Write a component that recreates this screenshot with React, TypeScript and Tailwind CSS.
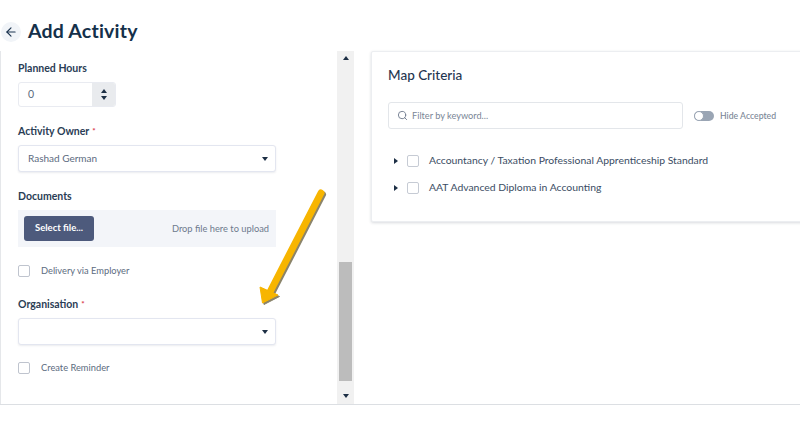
import React from 'react';
import { ArrowLeft, Search } from 'lucide-react';

const Caret = ({ className = '' }: { className?: string }) => <span className={`w-0 h-0 border-x-[3px] border-x-transparent border-t-[4px] border-t-[#1d2f45] ${className}`} />;
const CaretUp = ({ className = '' }: { className?: string }) => <span className={`w-0 h-0 border-x-[3px] border-x-transparent border-b-[4px] border-b-[#1d2f45] ${className}`} />;

const Label = ({ text, required }: { text: string; required?: boolean }) => (
    <div className="h-[14px] leading-[14px] text-[10.5px] font-bold text-[#2a3d55]">
        {text}
        {required && <span className="align-top text-[8px] text-[#d9364a] ml-[3px]">*</span>}
    </div>
);

const Check = ({ text }: { text: string }) => (
    <div className="flex items-center h-[12px]">
        <span className="w-[12px] h-[12px] rounded-[2px] border border-[#bfc4ce] bg-white" />
        <span className="ml-[11px] text-[9.3px] text-[#5c6b80]">{text}</span>
    </div>
);

const Select = ({ value }: { value?: string }) => (
    <div className="mt-[7px] w-[258px] h-[27px] flex items-center justify-between pl-[9px] pr-[7px] rounded-[3px] border border-[#e3e6f0] bg-white shadow-[0_1px_2px_rgba(60,70,100,0.1)]">
        <span className="text-[10px] text-[#5c6b80]">{value}</span>
        <Caret />
    </div>
);

const TreeRow = ({ text }: { text: string }) => (
    <div className="flex items-center h-[14px]">
        <span className="ml-[6px] w-0 h-0 border-y-[3px] border-y-transparent border-l-[4px] border-l-[#1d2f45]" />
        <span className="ml-[9px] w-[12px] h-[12px] rounded-[2px] border border-[#c6cbd4] bg-white" />
        <span className="ml-[10px] text-[10.4px] text-[#3a4c63]">{text}</span>
    </div>
);

export default function App() {
    return (
        <div className="relative w-[800px] h-[437px] overflow-hidden bg-white font-['Lato',sans-serif]">
            {/* Header */}
            <div className="h-[51px] pt-[11px] flex items-center">
                <div className="ml-[1px] mt-[1px] w-[20px] h-[20px] rounded-full bg-[#f1f4f8] flex items-center justify-center">
                    <ArrowLeft className="w-[14px] h-[14px] text-[#1d3550]" strokeWidth={2} />
                </div>
                <h1 className="ml-[7px] text-[19.5px] font-bold tracking-[0.2px] text-[#14304a]">Add Activity</h1>
            </div>

            <div className="flex h-[354px] border-b border-[#dcdfe3]">
                {/* Left form */}
                <div className="w-[337px] shrink-0 border-l border-[#e5e7ea] pl-[17px] pt-[10px]">
                    <Label text="Planned Hours" />
                    <div className="mt-[7px] w-[98px] h-[25px] flex rounded-[3px] border border-[#e9ebf1] bg-white overflow-hidden">
                        <span className="flex-1 pl-[9px] text-[10.5px] leading-[23px] text-[#5c6b80]">0</span>
                        <div className="w-[23px] bg-[#e9ebee] flex flex-col items-center justify-center gap-[3px]">
                            <CaretUp />
                            <Caret />
                        </div>
                    </div>
                    <div className="mt-[17px]"><Label text="Activity Owner" required /></div>
                    <Select value="Rashad German" />
                    <div className="mt-[17px]"><Label text="Documents" /></div>
                    <div className="mt-[7px] w-[258px] h-[37px] flex items-center justify-between pl-[6px] pr-[7px] bg-[#f3f5f9]">
                        <span className="w-[70px] h-[25px] rounded-[3px] bg-[#4d5a7c] text-white text-[9.5px] font-bold flex items-center justify-center">Select file...</span>
                        <span className="text-[9.3px] text-[#6e7a8d]">Drop file here to upload</span>
                    </div>
                    <div className="mt-[18px]"><Check text="Delivery via Employer" /></div>
                    <div className="mt-[20px]"><Label text="Organisation" required /></div>
                    <Select />
                    <div className="mt-[17px]"><Check text="Create Reminder" /></div>
                </div>

                {/* Scrollbar */}
                <div className="w-[17px] shrink-0 bg-[#f1f1f1] flex flex-col items-center">
                    <CaretUp className="mt-[5px]" />
                    <div className="flex-1" />
                    <div className="w-[13px] h-[119px] bg-[#bcbcbc]" />
                    <Caret className="mt-[13px] mb-[6px]" />
                </div>

                {/* Map criteria card */}
                <div className="ml-[17px] w-[440px] h-[171px] shrink-0 rounded-l-[2px] bg-white border border-[#eceef1] shadow-[0_1px_3px_rgba(40,50,70,0.18)] pl-[16px] pt-[14px]">
                    <h2 className="h-[18px] leading-[18px] text-[13.5px] font-medium text-[#1f3550]">Map Criteria</h2>
                    <div className="mt-[18px] flex items-center">
                        <div className="w-[295px] h-[27px] flex items-center pl-[8px] rounded-[3px] border border-[#e3e6ea] bg-white">
                            <Search className="w-[11px] h-[11px] text-[#6e7a8d]" strokeWidth={2} />
                            <span className="ml-[4px] text-[9.2px] text-[#7a8696]">Filter by keyword...</span>
                        </div>
                        <div className="ml-[11px] w-[20px] h-[10px] rounded-full bg-[#9aa5b4] relative">
                            <span className="absolute left-0 top-0 w-[10px] h-[10px] rounded-full bg-white border border-[#9aa5b4]" />
                        </div>
                        <span className="ml-[6px] text-[8.7px] font-medium text-[#7a8696]">Hide Accepted</span>
                    </div>
                    <div className="mt-[25px] flex flex-col gap-[13px]">
                        <TreeRow text="Accountancy / Taxation Professional Apprenticeship Standard" />
                        <TreeRow text="AAT Advanced Diploma in Accounting" />
                    </div>
                </div>
            </div>

            {/* Arrow annotation */}
            <svg className="absolute left-[255px] top-[185px]" width="80" height="125" viewBox="0 0 80 125">
                <g fill="#3d3208" stroke="#3d3208" opacity="0.6" transform="translate(1.5 1.5)">
                    <path d="M66 8 L15 107" fill="none" strokeWidth="7" strokeLinecap="round" />
                    <path d="M5 102 L7.5 118 L23 110 Z" strokeWidth="1" strokeLinejoin="round" />
                </g>
                <path d="M66 8 L15 107" fill="none" stroke="#f7b500" strokeWidth="7" strokeLinecap="round" />
                <path d="M5 102 L7.5 118 L23 110 Z" fill="#f7b500" stroke="#f7b500" strokeWidth="1" strokeLinejoin="round" />
            </svg>
        </div>
    );
}
